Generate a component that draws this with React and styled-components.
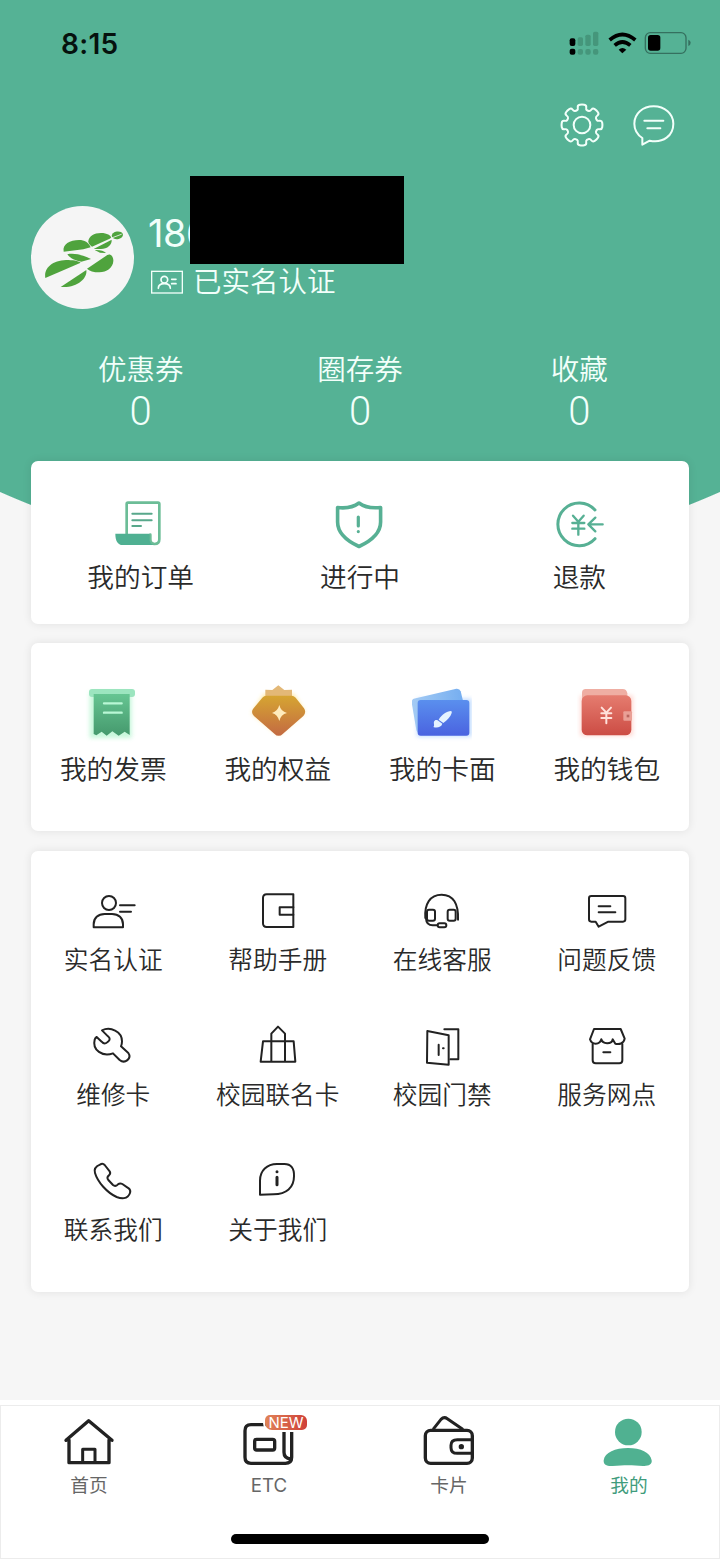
import React from 'react';
import styled, { createGlobalStyle } from 'styled-components';

const GlobalStyle = createGlobalStyle`
  * {
    box-sizing: border-box;
    margin: 0;
    padding: 0;
  }
  body {
    background: #f6f6f6;
    color: #2a2a2a;
    font-family: Inter, 'Noto Sans CJK SC', sans-serif;
  }
`;

const Page = styled.div`
  display: flex;
  flex-direction: column;
  width: 720px;
  height: 1559px;
  overflow: hidden;
  background: radial-gradient(
      circle at 360px -322px,
      #55b295 889.5px,
      transparent 890.5px
    )
    #f6f6f6;
`;

const StatusBar = styled.div`
  display: flex;
  justify-content: space-between;
  align-items: center;
  height: 86px;
  padding: 0 26px 0 61px;
`;

const Time = styled.span`
  padding-top: 1px;
  font-size: 28px;
  font-weight: 600;
  letter-spacing: 0.3px;
  color: #06120e;
`;

const Toolbar = styled.div`
  display: flex;
  justify-content: flex-end;
  align-items: center;
  gap: 12px;
  height: 78px;
  padding-right: 36px;
`;

const Icon = styled.svg`
  display: block;
  flex: none;
  width: ${(props) => props.$w || 60}px;
  height: ${(props) => props.$h || 60}px;
  fill: none;
  stroke: ${(props) => props.$color || 'none'};
  stroke-width: ${(props) => props.$stroke || 6};
  stroke-linecap: round;
  stroke-linejoin: round;
`;

const Profile = styled.div`
  position: relative;
  display: flex;
  height: 103px;
  margin-top: 42px;
  padding-left: 31px;
`;

const Avatar = styled.div`
  width: 103px;
  height: 103px;
  border-radius: 50%;
  background: #f5f5f5;
  overflow: hidden;
`;

const ProfileInfo = styled.div`
  margin-left: 14px;
  color: #f2fffa;
`;

const Phone = styled.div`
  font-size: 38px;
  font-weight: 430;
  letter-spacing: -0.5px;
  line-height: 55px;
`;

const PhoneMask = styled.div`
  position: absolute;
  left: 190px;
  top: -30px;
  width: 214px;
  height: 88px;
  background: #000;
`;

const Verified = styled.div`
  display: flex;
  align-items: center;
  gap: 10px;
  height: 42px;
  padding-left: 3px;
  font-size: 28.5px;
  font-weight: 350;
`;

const VerifiedText = styled.span`
  line-height: 36px;
`;

const Stats = styled.div`
  display: grid;
  grid-template-columns: repeat(3, 1fr);
  margin: 43px 31px 0;
  text-align: center;
  font-weight: 350;
  color: #f2fffa;
`;

const StatLabel = styled.div`
  font-size: 28.5px;
  line-height: 36px;
`;

const StatValue = styled.div`
  padding-top: 1px;
  font-family: Roboto, sans-serif;
  font-size: 40px;
  font-weight: 350;
  line-height: 46px;
`;

const Card = styled.section`
  display: grid;
  grid-template-columns: repeat(${(props) => props.$columns}, 1fr);
  align-content: start;
  row-gap: 40px;
  height: ${(props) => props.$height}px;
  margin: ${(props) => props.$top}px 31px 0;
  padding-top: ${(props) => props.$pad}px;
  border-radius: 7px;
  background: #fff;
  box-shadow: 0 0 10px rgba(0, 0, 0, 0.09);
`;

const Item = styled.div`
  display: flex;
  flex-direction: column;
  align-items: center;
  gap: ${(props) => props.$gap}px;
`;

const ItemLabel = styled.span`
  font-size: ${(props) => (props.$small ? 24.7 : 26.7)}px;
  font-weight: 350;
  line-height: ${(props) => (props.$small ? 32 : 36)}px;
  white-space: nowrap;
`;

const Footer = styled.footer`
  height: 159px;
  margin-top: auto;
  padding-top: 5px;
  background: #fff;
`;

const FooterInner = styled.div`
  height: 154px;
  border: 1px solid #ececec;
`;

const Tabs = styled.nav`
  display: grid;
  grid-template-columns: repeat(4, 180px);
  margin-left: -2px;
  padding-top: 6px;
`;

const Tab = styled.div`
  position: relative;
  display: flex;
  flex-direction: column;
  align-items: center;
  gap: 2px;
  font-size: 18.7px;
  line-height: 24px;
  color: ${(props) => (props.$active ? '#3f9c7c' : '#666')};
`;

const Badge = styled.span`
  position: absolute;
  left: 86px;
  top: 3px;
  width: 42px;
  height: 15px;
  border-radius: 5px 6px 5px 7px;
  background: linear-gradient(90deg, #e08358, #cf4038);
  box-shadow: 0 0 0 2px #fff;
  color: #fff;
  font-size: 15px;
  line-height: 15px;
  text-align: center;
`;

const HomeIndicator = styled.div`
  width: 258px;
  height: 10px;
  margin: 36px auto 0;
  border-radius: 5px;
  background: #000;
`;

// closed outline with eight rounded teeth
const gearPath = (cx, cy) => {
  const pts = [];
  for (let i = 0; i < 8; i += 1) {
    [
      [-22.5, 46],
      [-14, 48],
      [-13, 61],
      [0, 62],
      [13, 61],
      [14, 48],
    ].forEach(([angle, r]) => {
      const rad = ((i * 45 + angle) * Math.PI) / 180;
      pts.push([cx + r * Math.cos(rad), cy + r * Math.sin(rad)]);
    });
  }
  const mid = (a, b) => `${(a[0] + b[0]) / 2} ${(a[1] + b[1]) / 2}`;
  const last = pts[pts.length - 1];
  return `M${mid(last, pts[0])}${pts
    .map((p, i) => `Q${p[0]} ${p[1]} ${mid(p, pts[(i + 1) % pts.length])}`)
    .join('')}Z`;
};

const StatusIcons = () => (
  <Icon viewBox="80 84 381 90" $w={127} $h={30}>
    <g fill="#000">
      <rect x="88" y="115" width="17" height="23" rx="6" />
      <rect x="88" y="146" width="17" height="18" rx="6" />
    </g>
    <g fill="#45967b">
      <rect x="112" y="112" width="16" height="26" rx="5" />
      <rect x="135" y="104" width="16" height="34" rx="5" />
      <rect x="158" y="95" width="16" height="43" rx="5" />
      <rect x="112" y="147" width="16" height="17" rx="6" />
      <rect x="135" y="147" width="16" height="17" rx="6" />
      <rect x="158" y="147" width="16" height="17" rx="6" />
    </g>
    <g stroke="#000" strokeWidth="11" strokeLinecap="butt">
      <path d="M208 120 Q246 87 285 120" />
      <path d="M223 136 Q246 116 270 136" />
    </g>
    <path d="M235 149 Q246 139 258 149 L246 160Z" fill="#000" />
    <rect x="315" y="98" width="122" height="62" rx="15" stroke="#35705f" strokeWidth="4" />
    <rect x="323" y="105" width="37" height="47" rx="8" fill="#000" />
    <path d="M444 119 Q451 122 451 128 Q451 135 444 138Z" fill="#35705f" />
  </Icon>
);

const GearIcon = () => (
  <Icon viewBox="35 285 180 180" $color="#f2fffa">
    <path d={gearPath(125, 375)} />
    <circle cx="125" cy="375" r="25" />
  </Icon>
);

const MessageIcon = () => (
  <Icon viewBox="252 285 180 180" $color="#f2fffa">
    <path d="M307 414 V434 L329 422 C370 430 400 407 400 371 C400 341 374 319 341 319 C308 319 283 341 283 371 C283 389 292 404 307 414Z" />
    <path d="M313 362H370M322 385H361" />
  </Icon>
);

// green leaves split by a white road
const LogoIcon = () => (
  <Icon viewBox="33 107 309 309" $w={103} $h={103}>
    <g fill="#4fa33d">
      <path d="M76 323C70 292 100 270 138 269C158 269 174 271 182 277Z" />
      <path d="M122 350L199 299C203 325 170 354 122 350Z" />
      <path d="M131 244C126 222 150 209 177 209C194 209 205 216 212 231L190 237Z" />
      <path d="M142 252C165 247 192 256 213 266L184 274C168 272 150 264 142 252Z" />
      <path d="M205 213C206 198 222 188 243 188C262 188 272 195 274 203L216 229C210 225 205 220 205 213Z" />
      <path d="M221 236L275 208C276 224 262 235 243 236Z" />
      <path d="M224 239C238 238 252 241 258 248L240 247Z" />
      <path d="M262 254C272 248 281 260 280 272C279 292 260 306 238 306C221 306 208 302 201 295Z" />
      <ellipse cx="292" cy="195" rx="17" ry="11.500" transform="rotate(-8 292 195)" />
    </g>
    <path d="M272 204L304 192" stroke="#f5f5f5" strokeWidth="2.500" />
  </Icon>
);

const IdIcon = () => (
  <Icon viewBox="393 300 96 72" $w={32} $h={24} $color="#f2fffa" $stroke={5}>
    <rect x="395" y="304" width="92" height="65" strokeLinejoin="miter" strokeWidth="4" />
    <circle cx="433" cy="329" r="10" />
    <path d="M415 355 C415 345 424 341 433 341 C443 341 451 346 451 355M455 328H468M455 341H468" />
  </Icon>
);

const OrderIcon = () => (
  <Icon viewBox="272 42 180 180" $color="#6cbd97">
    <path d="M319 162V72Q319 68 323 68H413Q417 68 417 72V178C417 188 411 192 403 192C395 192 390 187 390 178V164" strokeWidth="8" />
    <path d="M285 161H388V178C388 187 393 195 404 195H307C292 195 285 182 285 161Z" fill="#4fb092" stroke="none" />
    <path d="M336 101H394M336 121H394M336 138H362" stroke="#58a88b" />
  </Icon>
);

const ShieldIcon = () => (
  <Icon viewBox="330 494 60 60" $color="#57b094" $stroke={3.6}>
    <path d="M359 503C353 507.500 346 508.500 337.600 507.500V522C337.600 533 347 541 359 546.500C371 541 380.600 533 380.600 522V507.500C372 508.500 365 507.500 359 503Z" />
    <path d="M358.300 517V526M358.300 531.500V531.600" strokeWidth="3.200" />
  </Icon>
);

const RefundIcon = () => (
  <Icon viewBox="568 42 180 180" $color="#57b094" $stroke={7}>
    <path d="M706 90A64 64 0 1 0 706 176" strokeWidth="9" />
    <path d="M640 107L656 125L672 107M656 125V164M638 129H674M638 146H674" />
    <path d="M686 133H729M707 113L686 133L707 154" />
  </Icon>
);

const InvoiceIcon = () => (
  <Icon viewBox="160 39 180 180">
    <defs>
      <linearGradient id="invoice" x1="0" y1="0" x2="0" y2="1">
        <stop offset="0" stopColor="#66c592" />
        <stop offset="1" stopColor="#45996d" />
      </linearGradient>
      <filter id="glow" x="-30%" y="-30%" width="160%" height="160%">
        <feGaussianBlur stdDeviation="6" />
      </filter>
    </defs>
    <rect x="180" y="66" width="126" height="138" fill="#b9f5d2" opacity="0.8" filter="url(#glow)" />
    <rect x="178" y="57" width="138" height="24" rx="9" fill="#9ce5bf" />
    <path d="M192 72H300V195L285 185L267 197L248 184L231 197L216 185L200 196L192 192Z" fill="url(#invoice)" />
    <path d="M223 100H276M223 128H276" stroke="#b9f7d5" strokeWidth="7" />
  </Icon>
);

const BenefitIcon = () => (
  <Icon viewBox="653 39 180 180">
    <defs>
      <linearGradient id="benefit" x1="0" y1="0" x2="0" y2="1">
        <stop offset="0" stopColor="#d6a532" />
        <stop offset="1" stopColor="#c36a42" />
      </linearGradient>
    </defs>
    <path d="M701 72H790L824 126L745 196L664 130Z" fill="#ffe38a" opacity="0.8" filter="url(#glow)" />
    <path d="M705 78V59L726 60L744 46L762 60L785 59V78Z" fill="#e3b877" />
    <path d="M708 77H784Q790 77 796 83L821 115Q829 127 819 138L758 191Q745 204 732 191L671 138Q661 128 668 117L696 83Q701 77 708 77Z" fill="url(#benefit)" />
    <path d="M747 105Q751 124 770 129Q751 134 747 153Q742 134 725 129Q742 124 747 105Z" fill="#ffebbd" />
  </Icon>
);

const CardFaceIcon = () => (
  <Icon viewBox="157 39 180 180">
    <defs>
      <linearGradient id="face" x1="0" y1="0" x2="0" y2="1">
        <stop offset="0" stopColor="#5a8fee" />
        <stop offset="1" stopColor="#4a63e0" />
      </linearGradient>
      <linearGradient id="faceBack" x1="0" y1="0" x2="1" y2="0">
        <stop offset="0" stopColor="#a4cbf4" />
        <stop offset="1" stopColor="#74adf0" />
      </linearGradient>
    </defs>
    <rect x="172" y="86" width="164" height="114" fill="#a7cdff" opacity="0.7" filter="url(#glow)" />
    <path d="M162 86L290 56Q300 55 303 64L314 108L184 190Q172 188 170 180L156 98Q155 89 162 86Z" fill="url(#faceBack)" />
    <rect x="174" y="90" width="155" height="107" rx="9" fill="url(#face)" />
    <path d="M237 149C246 134 261 124 274 123Q278 124 276 129C273 140 263 151 251 159ZM234 151L248 161C245 171 233 175 221 171C226 166 221 160 223 155C225 150 229 149 234 151Z" fill="#e4f3ff" />
  </Icon>
);

const PurseIcon = () => (
  <Icon viewBox="650 39 180 180">
    <defs>
      <linearGradient id="purse" x1="0" y1="0" x2="0" y2="1">
        <stop offset="0" stopColor="#e57c6f" />
        <stop offset="1" stopColor="#cc4c44" />
      </linearGradient>
    </defs>
    <rect x="660" y="76" width="158" height="122" fill="#ffb3a7" opacity="0.5" filter="url(#glow)" />
    <path d="M665 100V68Q665 57 676 57H787Q799 57 801 70V100Z" fill="#efaea3" />
    <rect x="664" y="76" width="149" height="120" rx="17" fill="url(#purse)" />
    <rect x="789" y="124" width="26" height="28" rx="3" fill="#eaa096" />
    <rect x="799" y="134" width="8" height="8" fill="#b9655e" />
    <path d="M724 113L738 128L752 113M738 128V160M723 130H753M723 144H753" stroke="#ffe2dc" strokeWidth="6" />
  </Icon>
);

const UserIcon = () => (
  <>
    <circle cx="238" cy="99" r="21" />
    <path d="M192 172V163C192 144 205 132 225 132H247C267 132 280 144 280 163V172Z" />
    <path d="M271 106H315M271 125H304" />
  </>
);

const BookIcon = () => (
  <>
    <path d="M789 73H709Q698 73 698 84V160Q698 171 709 171H789Z" />
    <path d="M789 112H748V134H789" />
  </>
);

const HeadsetIcon = () => (
  <>
    <path d="M197 144C194 102 211 74 246 74C281 74 297 102 295 149M199 146C200 160 207 166 219 166H233" />
    <rect x="202" y="119" width="24" height="33" rx="6" />
    <rect x="264" y="119" width="24" height="33" rx="6" />
    <rect x="234" y="160" width="26" height="12" rx="6" />
  </>
);

const FeedbackIcon = () => (
  <>
    <path d="M693 78H788Q795 78 795 85V148Q795 155 788 155H744L715 170L706 155H693Q686 155 686 148V85Q686 78 693 78Z" />
    <path d="M715 109H750M715 127H765" />
  </>
);

const WrenchIcon = () => (
  <path d="M217 481C242 469 277 484 277 514Q277 522 274 529L296 549C307 565 286 583 270 570L250 550C219 562 187 540 195 509Q197 503 201 501L216 515Q225 526 235 515Q245 507 235 499Z" />
);

const CampusIcon = () => (
  <path d="M723 573V491L743 470L764 491V573M698 514H790L795 575H691Z" />
);

const DoorIcon = () => (
  <>
    <path d="M203 483L267 496V584L202 578Z" />
    <path d="M254 478H296V568H272M237 524V555M250 535H252" />
  </>
);

const ShopIcon = () => (
  <>
    <path d="M701 477H781L793 506C790 522 776 524 765 521L757 508C755 523 727 524 723 508C718 526 694 525 689 508Z" />
    <path d="M697 522V571Q697 580 706 580H777Q786 580 786 571V522M729 547H750" />
  </>
);

const PhoneIcon = () => (
  <path d="M211 884Q219 878 225 885L240 904Q244 910 238 916Q230 922 236 930L250 945Q257 951 265 943Q271 938 278 942L297 955Q304 961 301 969C294 989 274 986 261 981C232 968 204 936 196 909C192 896 201 888 211 884Z" />
);

const AboutIcon = () => (
  <>
    <path d="M689 974V932C689 902 710 882 740 882H762C782 882 792 894 791 919C791 953 768 973 730 973Z" />
    <path d="M740 922V944M740 905V905.500" strokeWidth="9" />
  </>
);

const HomeIcon = () => (
  <>
    <path d="M199 151L267 92L337 151M208 150V218H328V150" />
    <path d="M249 215V178H286V215" strokeWidth="9" />
  </>
);

const EtcIcon = () => (
  <>
    <path d="M804 104H754Q736 104 736 122V202Q736 220 754 220H857Q876 220 876 202V124" />
    <rect x="765" y="148" width="60" height="32" rx="6" />
    <path d="M853 124V187C853 198 860 206 873 207" />
  </>
);

const WalletIcon = () => (
  <>
    <rect x="197" y="121" width="141" height="99" rx="16" />
    <path d="M222 116L244 88Q253 79 263 86L308 117" strokeWidth="9" />
    <path d="M336 149H293Q274 149 274 166V173Q274 190 293 190H336" strokeWidth="9" />
    <circle cx="305" cy="170" r="4" fill="#222" strokeWidth="8" />
  </>
);

const MineIcon = () => (
  <g fill="#50b191" stroke="none">
    <circle cx="806" cy="126" r="40" />
    <path d="M732 211C735 187 767 174 805 174C843 174 872 187 876 211C878 224 866 229 850 228C818 225 793 225 759 228C742 229 731 225 732 211Z" />
  </g>
);

const orders = [
  { label: '我的订单', icon: <OrderIcon /> },
  { label: '进行中', icon: <ShieldIcon /> },
  { label: '退款', icon: <RefundIcon /> },
];

const assets = [
  { label: '我的发票', icon: <InvoiceIcon /> },
  { label: '我的权益', icon: <BenefitIcon /> },
  { label: '我的卡面', icon: <CardFaceIcon /> },
  { label: '我的钱包', icon: <PurseIcon /> },
];

const services = [
  { label: '实名认证', box: '160 33 180 180', Shape: UserIcon },
  { label: '帮助手册', box: '653 33 180 180', Shape: BookIcon },
  { label: '在线客服', box: '157 33 180 180', Shape: HeadsetIcon },
  { label: '问题反馈', box: '650 33 180 180', Shape: FeedbackIcon },
  { label: '维修卡', box: '160 438 180 180', Shape: WrenchIcon },
  { label: '校园联名卡', box: '653 438 180 180', Shape: CampusIcon },
  { label: '校园门禁', box: '157 438 180 180', Shape: DoorIcon },
  { label: '服务网点', box: '650 438 180 180', Shape: ShopIcon },
  { label: '联系我们', box: '160 843 180 180', Shape: PhoneIcon },
  { label: '关于我们', box: '653 843 180 180', Shape: AboutIcon },
];

const stats = ['优惠券', '圈存券', '收藏'];

export default function App() {
  return (
    <Page>
      <GlobalStyle />
      <StatusBar>
        <Time>8:15</Time>
        <StatusIcons />
      </StatusBar>
      <Toolbar>
        <GearIcon />
        <MessageIcon />
      </Toolbar>
      <Profile>
        <Avatar>
          <LogoIcon />
        </Avatar>
        <ProfileInfo>
          <Phone>186</Phone>
          <Verified>
            <IdIcon />
            <VerifiedText>已实名认证</VerifiedText>
          </Verified>
        </ProfileInfo>
        <PhoneMask />
      </Profile>
      <Stats>
        {stats.map((label) => (
          <div key={label}>
            <StatLabel>{label}</StatLabel>
            <StatValue>0</StatValue>
          </div>
        ))}
      </Stats>
      <Card $columns={3} $height={163} $top={26} $pad={33}>
        {orders.map((item) => (
          <Item key={item.label} $gap={5}>
            {item.icon}
            <ItemLabel>{item.label}</ItemLabel>
          </Item>
        ))}
      </Card>
      <Card $columns={4} $height={188} $top={19} $pad={40}>
        {assets.map((item) => (
          <Item key={item.label} $gap={8}>
            {item.icon}
            <ItemLabel>{item.label}</ItemLabel>
          </Item>
        ))}
      </Card>
      <Card $columns={4} $height={441} $top={20} $pad={30}>
        {services.map(({ label, box, Shape }) => (
          <Item key={label} $gap={3}>
            <Icon viewBox={box} $color="#222">
              <Shape />
            </Icon>
            <ItemLabel $small>{label}</ItemLabel>
          </Item>
        ))}
      </Card>
      <Footer>
        <FooterInner>
          <Tabs>
            <Tab>
              <Icon viewBox="178 66 180 180" $color="#222" $stroke={10}>
                <HomeIcon />
              </Icon>
              首页
            </Tab>
            <Tab>
              <Icon viewBox="718 66 180 180" $color="#222" $stroke={10}>
                <EtcIcon />
              </Icon>
              ETC
              <Badge>NEW</Badge>
            </Tab>
            <Tab>
              <Icon viewBox="178 66 180 180" $color="#222" $stroke={10}>
                <WalletIcon />
              </Icon>
              卡片
            </Tab>
            <Tab $active>
              <Icon viewBox="718 66 180 180">
                <MineIcon />
              </Icon>
              我的
            </Tab>
          </Tabs>
          <HomeIndicator />
        </FooterInner>
      </Footer>
    </Page>
  );
}
